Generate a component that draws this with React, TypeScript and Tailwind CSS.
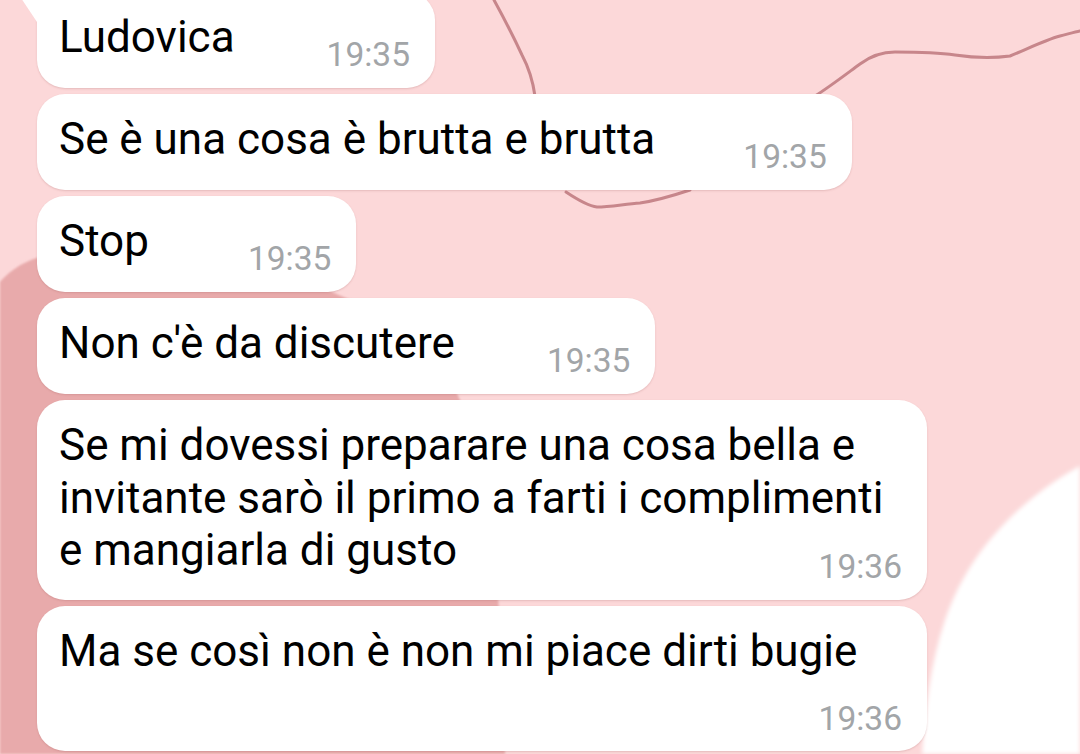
import React from "react";

const TS = "text-[33.5px] leading-[40px] text-[#a2a5a8] whitespace-nowrap";
const TXT = "text-[44px] leading-[52.5px] text-black whitespace-nowrap";

function Single({
  text,
  time,
  tail,
  gapClass,
}: {
  text: string;
  time: string;
  tail?: boolean;
  gapClass: string;
}) {
  return (
    <div
      className={
        "relative flex bg-white pl-[22px] pr-[25px] pt-[19px] pb-[13px] shadow-[0_1px_2px_rgba(150,80,80,0.22)] " +
        (tail ? "rounded-[28px] rounded-tl-none" : "rounded-[28px]")
      }
    >
      {tail && (
        <svg className="absolute left-[-20px] top-0" width="20" height="30" viewBox="0 0 20 30">
          <polygon points="0,0 20,0 20,30" fill="#ffffff" />
        </svg>
      )}
      <span className={TXT}>{text}</span>
      <span className={TS + " mt-[24px] " + gapClass}>{time}</span>
    </div>
  );
}

export default function App() {
  return (
    <div
      className="relative w-[1080px] h-[754px] overflow-hidden bg-[#fcd8d9]"
      style={{ fontFamily: "Roboto, 'Noto Sans', sans-serif" }}
    >
      <svg className="absolute inset-0" width="1080" height="754" viewBox="0 0 1080 754">
        <defs>
          <filter id="blur2" x="-10%" y="-10%" width="120%" height="120%">
            <feGaussianBlur stdDeviation="2" />
          </filter>
          <filter id="blur1" x="-10%" y="-10%" width="120%" height="120%">
            <feGaussianBlur stdDeviation="0.8" />
          </filter>
        </defs>
        <path
          d="M0,282 C18,262 40,252 90,250 C250,250 420,300 460,400 C490,470 500,560 505,754 L0,754 Z"
          fill="#e8aaab"
          filter="url(#blur1)"
        />
        <path
          d="M1080,466 C1010,505 965,560 945,620 C930,665 925,710 922,754 L1080,754 Z"
          fill="#ffffff"
          filter="url(#blur2)"
        />
        <path
          d="M494,0 C505,20 515,40 522,55 C530,70 533,82 535,96"
          fill="none"
          stroke="#c7868b"
          strokeWidth="3"
          strokeLinecap="round"
        />
        <path
          d="M566,192 C578,200 588,206 597,207 C610,207 625,204 640,203 C660,200 675,195 690,190"
          fill="none"
          stroke="#c7868b"
          strokeWidth="3"
          strokeLinecap="round"
        />
        <path
          d="M815,96 C828,88 845,75 860,64 C872,55 882,52 895,52 C915,52 935,52 955,55 C975,58 995,58 1010,56 C1025,50 1045,40 1060,36 C1068,34 1075,32 1080,31"
          fill="none"
          stroke="#c7868b"
          strokeWidth="3"
          strokeLinecap="round"
        />
      </svg>

      <div className="relative flex flex-col items-start gap-[6px] pl-[37px] mt-[-8px]">
        <Single text="Ludovica" time="19:35" tail gapClass="ml-[92px]" />
        <Single text="Se è una cosa è brutta e brutta" time="19:35" gapClass="ml-[88px]" />
        <Single text="Stop" time="19:35" gapClass="ml-[99px]" />
        <Single text="Non c'è da discutere" time="19:35" gapClass="ml-[92px]" />

        <div className="flex flex-col w-[890px] bg-white rounded-[28px] pl-[22px] pr-[25px] pt-[19px] pb-[13px] shadow-[0_1px_2px_rgba(150,80,80,0.22)]">
          <div className={TXT}>
            Se mi dovessi preparare una cosa bella e
            <br />
            invitante sarò il primo a farti i complimenti
            <br />
            e mangiarla di gusto
          </div>
          <span className={TS + " self-end mt-[-30px]"}>19:36</span>
        </div>

        <div className="flex flex-col w-[890px] bg-white rounded-[28px] pl-[22px] pr-[25px] pt-[19px] pb-[12px] shadow-[0_1px_2px_rgba(150,80,80,0.22)]">
          <div className={TXT}>Ma se così non è non mi piace dirti bugie</div>
          <span className={TS + " self-end mt-[22px]"}>19:36</span>
        </div>
      </div>
    </div>
  );
}
